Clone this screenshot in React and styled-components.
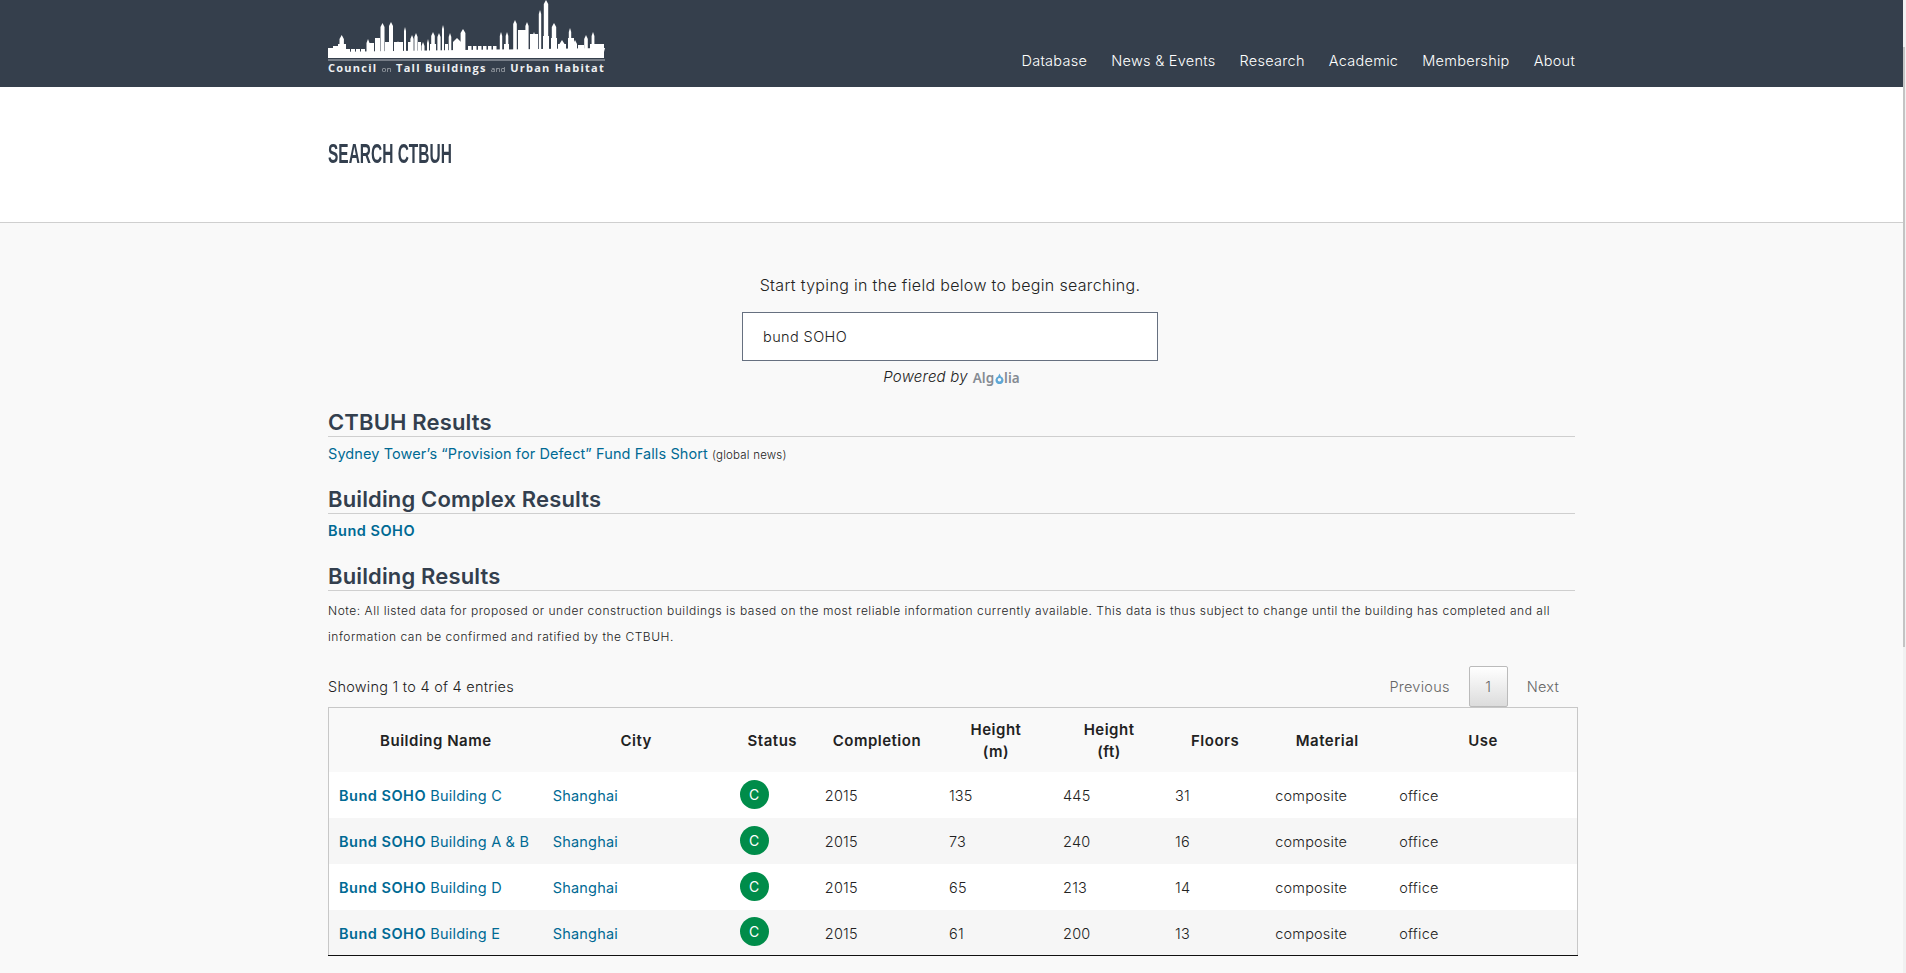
import React from 'react';
import styled, { createGlobalStyle } from 'styled-components';

const Global = createGlobalStyle`
  html, body { margin: 0; padding: 0; background: #f9f9f9; overflow: hidden; }
  body { font-family: Inter, "Liberation Sans", sans-serif; color: #222; }
`;
const Page = styled.div`width: 1903px; height: 973px; overflow: hidden;`;
const Header = styled.header`height: 87px; background: #353f4c;`;
const Wrap = styled.div`width: 1247px; margin-left: 328px;`;
const HeaderRow = styled(Wrap)`display: flex; justify-content: space-between; height: 87px;`;
const Logo = styled.div`width: 277px; display: flex; flex-direction: column;`;
const LogoText = styled.div`display: flex; justify-content: space-between; align-items: baseline; color: #eef0f2; font: bold 11px "Open Sans", sans-serif; letter-spacing: 1.25px; line-height: 13px; white-space: nowrap;`;
const Small = styled.span`font-size: 7.5px; font-weight: 400; opacity: .65; letter-spacing: .5px;`;
const Nav = styled.nav`display: flex; gap: 24px; padding-top: 51px;`;
const NavItem = styled.a`color: #fff; font-size: 14.5px; line-height: 20px; white-space: nowrap; font-weight: 300; letter-spacing: .28px;`;
const Hero = styled.div`height: 135px; background: #fff; border-bottom: 1px solid #cfcfcf;`;
const Title = styled.h1`margin: 0; padding-top: 50px; font: bold 28px/34px "Liberation Sans", sans-serif; color: #333f4e; text-transform: uppercase; white-space: nowrap; transform: scaleX(.553); transform-origin: left center;`;
const SearchBlock = styled.div`display: flex; flex-direction: column; align-items: center; padding: 52px 3px 0 0;`;
const Hint = styled.div`font-size: 16px; line-height: 20px; font-weight: 300; letter-spacing: .33px;`;
const SearchInput = styled.div`box-sizing: border-box; width: 416px; height: 49px; margin-top: 17px; background: #fff; border: 1px solid #667080; padding: 0 20px; display: flex; align-items: center; font-size: 14.5px; font-weight: 300; letter-spacing: .4px;`;
const Powered = styled.div`display: flex; align-items: center; gap: 5px; height: 20px; margin-top: 5px; padding-left: 3px; font-size: 15px; font-style: italic; font-weight: 300; letter-spacing: .2px;`;
const Algolia = styled.span`display: inline-flex; align-items: center; font: 600 13.5px "Noto Sans", sans-serif; font-style: normal; color: #858b93; padding-top: 4px; letter-spacing: 0;`;
const Section = styled.section`height: 77px;`;
const FirstSection = styled(Section)`margin-top: 13px;`;
const H = styled.h2`box-sizing: border-box; margin: 0; height: 38px; padding-top: 9px; font-size: 22px; line-height: 29px; font-weight: 600; letter-spacing: .15px; color: #333f4e; border-bottom: 1px solid #cfcfcf;`;
const Links = styled.div`font-size: 14.5px; line-height: 20px; padding-top: 7px;`;
const A = styled.a`color: #006a94; font-weight: ${p => p.$bold ? 600 : 400}; letter-spacing: ${p => p.$bold ? '.5px' : '.2px'};`;
const LeadLink = styled(A)`letter-spacing: .1px;`;
const Tiny = styled.span`font-size: 11.5px; font-weight: 300; letter-spacing: .2px;`;
const Note = styled.p`margin: 7px 0 0; font-size: 12px; line-height: 26px; font-weight: 300; letter-spacing: .52px; white-space: nowrap;`;
const ControlRow = styled.div`display: flex; justify-content: space-between; align-items: flex-end; margin-top: 17px; height: 40px;`;
const Showing = styled.div`font-size: 14.5px; line-height: 20px; padding-bottom: 10px; font-weight: 300; letter-spacing: .25px;`;
const Pager = styled.div`display: flex; align-items: center; margin-right: -3px; font-size: 14.5px; color: #666; font-weight: 300; letter-spacing: .25px;`;
const PageLink = styled.span`padding: 0 19px;`;
const PageCurrent = styled.span`box-sizing: border-box; width: 39px; height: 41px; display: flex; align-items: center; justify-content: center; border: 1px solid #bbb; border-radius: 2px; background: linear-gradient(#fff, #dcdcdc);`;
const Table = styled.table`width: 1250px; table-layout: fixed; border-collapse: collapse; border: 1px solid #c8c8c8; border-bottom: 1px solid #111; box-sizing: border-box;`;
const Th = styled.th`height: 64px; padding: 2px 10px 0; box-sizing: border-box; font-size: 15px; line-height: 22px; font-weight: 600; letter-spacing: .5px; color: #222; text-align: center;`;
const Tr = styled.tr`background: ${p => p.$odd ? '#fff' : '#f6f6f6'};`;
const Td = styled.td`height: 46px; padding: 2px 10px 0; box-sizing: border-box; font-size: 14.5px; white-space: nowrap; font-weight: 300; letter-spacing: .2px;`;
const Circle = styled.span`width: 29px; height: 29px; border-radius: 50%; background: #008c4a; color: #fff; display: flex; align-items: center; justify-content: center; font-size: 14px; font-weight: 400; margin-top: -3px;`;
const ScrollRail = styled.div`position: fixed; top: 0; right: 0; bottom: 0; width: 3px; background: #f1f1f1;`;
const ScrollThumb = styled.div`position: absolute; top: 47px; left: 0; height: 600px; width: 2px; background: #c4c4c4;`;

const widths = [214, 187, 85, 124, 114, 112, 100, 124, 188];
const rows = [
  ['Building C', 135, 445, 31], ['Building A & B', 73, 240, 16],
  ['Building D', 65, 213, 14], ['Building E', 61, 200, 13],
];
const spires = [
  [13.7,35,2.2],[40,39,1.5],[54.5,23,2],[63,22,2],[70,41,1.5],[77,27,1],[84,35,1.6],[88,33,1.6],[95,42,1.5],[100,39,1],
  [105,32,1.8],[111,33,1.6],[115,25,1],[122,33,1.3],[129,38,4],[135,29,2.4],[173,32,1.2],[179,32,1.3],[187,20,1.8],
  [199,22,1.6],[206,32,1.4],[212,10,1.2],[218,0,2.2],[226,23,2.2],[234,40,2.5],[242,28,1.2],[247,40,2],[258,35,1.8],[265,32,1.4],[271,45,1.5],
];
const blocks = [
  [0,48,5],[5,46,5],[10,44,8],[18,49,4],[23,49,4],[28,49,4],[33,49,4],[41,43,5],[47,38,5],[57,42,5],[66,42,9],[80,42,4],[90,42,3],[102,44,6],[117,44,3],
  [140,46,3.5],[145,46,3.5],[150,46,3.5],[155,46,3.5],[160,46,3.5],[165,46,3.5],[176,44,5],[190,30,8],[202,34,8],[215,36,6],[223,38,6],[230,44,8],[240,38,6],[250,45,6],[262,44,14],
];
const Skyline = () => (
  <svg width="277" height="61" viewBox="0 0 277 61" fill="#fff" style={{ display: 'block' }}>
    <defs><filter id="soft"><feGaussianBlur stdDeviation="0.45" /></filter></defs>
    <g filter="url(#soft)">
      <polygon points="0,52 277,48 276,52 274,58 0,58" />
      {blocks.map((b, i) => <rect key={i} x={b[0]} y={b[1]} width={b[2]} height={58 - b[1]} />)}
      {spires.map((s, i) => <polygon key={i} points={`${s[0] - s[2]},55 ${s[0] - s[2]},${s[1] + 4} ${s[0]},${s[1]} ${s[0] + s[2]},${s[1] + 4} ${s[0] + s[2]},55`} />)}
    </g>
    <rect x="0" y="59.5" width="277" height="1" fill="#b9bec4" />
  </svg>
);
const Drop = () => (
  <svg width="9" height="11" viewBox="0 0 9 11" style={{ margin: '1px 0.5px 0' }}>
    <path d="M4.5 0.5 L6 3.5 A4 4 0 1 1 3 3.5 Z" fill="#5fa8d6" />
    <circle cx="4.5" cy="6.8" r="1.8" fill="#f9f9f9" />
  </svg>
);

export default function App() {
  return (
    <Page>
      <Global />
      <Header>
        <HeaderRow>
          <Logo>
            <Skyline />
            <LogoText><span>Council</span><Small>on</Small><span>Tall Buildings</span><Small>and</Small><span>Urban Habitat</span></LogoText>
          </Logo>
          <Nav>
            {['Database', 'News & Events', 'Research', 'Academic', 'Membership', 'About'].map(n => <NavItem key={n}>{n}</NavItem>)}
          </Nav>
        </HeaderRow>
      </Header>
      <Hero><Wrap><Title>Search CTBUH</Title></Wrap></Hero>
      <Wrap>
        <SearchBlock>
          <Hint>Start typing in the field below to begin searching.</Hint>
          <SearchInput>bund SOHO</SearchInput>
          <Powered>Powered by <Algolia>Alg<Drop />lia</Algolia></Powered>
        </SearchBlock>
        <FirstSection>
          <H>CTBUH Results</H>
          <Links><LeadLink>Sydney Tower’s “Provision for Defect” Fund Falls Short</LeadLink> <Tiny>(global news)</Tiny></Links>
        </FirstSection>
        <Section>
          <H>Building Complex Results</H>
          <Links><A $bold>Bund SOHO</A></Links>
        </Section>
        <H>Building Results</H>
        <Note>Note: All listed data for proposed or under construction buildings is based on the most reliable information currently available. This data is thus subject to change until the building has completed and all<br />information can be confirmed and ratified by the CTBUH.</Note>
        <ControlRow>
          <Showing>Showing 1 to 4 of 4 entries</Showing>
          <Pager><PageLink>Previous</PageLink><PageCurrent>1</PageCurrent><PageLink>Next</PageLink></Pager>
        </ControlRow>
        <Table>
          <colgroup>{widths.map((w, i) => <col key={i} style={{ width: w }} />)}</colgroup>
          <thead>
            <tr>
              <Th>Building Name</Th><Th>City</Th><Th>Status</Th><Th>Completion</Th><Th>Height<br />(m)</Th><Th>Height<br />(ft)</Th><Th>Floors</Th><Th>Material</Th><Th>Use</Th>
            </tr>
          </thead>
          <tbody>
            {rows.map((r, i) => (
              <Tr key={r[0]} $odd={i % 2 === 0}>
                <Td><A><A $bold>Bund SOHO</A> {r[0]}</A></Td>
                <Td><A>Shanghai</A></Td>
                <Td><Circle>C</Circle></Td>
                <Td>2015</Td><Td>{r[1]}</Td><Td>{r[2]}</Td><Td>{r[3]}</Td>
                <Td>composite</Td><Td>office</Td>
              </Tr>
            ))}
          </tbody>
        </Table>
      </Wrap>
      <ScrollRail><ScrollThumb /></ScrollRail>
    </Page>
  );
}
